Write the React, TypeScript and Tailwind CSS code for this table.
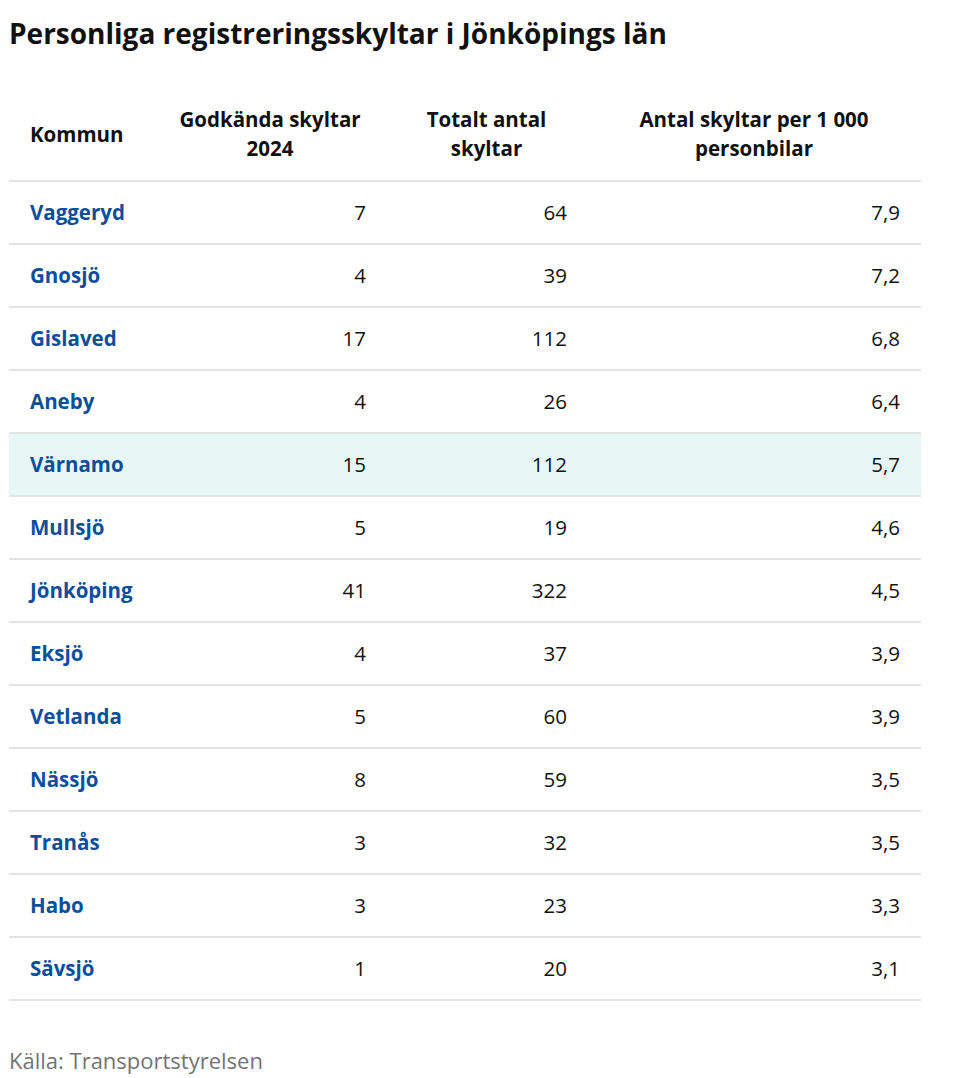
import React from "react"

type Row = {
  name: string
  approved: number
  total: number
  perThousand: string
  highlight?: boolean
}

const rows: Row[] = [
  { name: "Vaggeryd", approved: 7, total: 64, perThousand: "7,9" },
  { name: "Gnosjö", approved: 4, total: 39, perThousand: "7,2" },
  { name: "Gislaved", approved: 17, total: 112, perThousand: "6,8" },
  { name: "Aneby", approved: 4, total: 26, perThousand: "6,4" },
  { name: "Värnamo", approved: 15, total: 112, perThousand: "5,7", highlight: true },
  { name: "Mullsjö", approved: 5, total: 19, perThousand: "4,6" },
  { name: "Jönköping", approved: 41, total: 322, perThousand: "4,5" },
  { name: "Eksjö", approved: 4, total: 37, perThousand: "3,9" },
  { name: "Vetlanda", approved: 5, total: 60, perThousand: "3,9" },
  { name: "Nässjö", approved: 8, total: 59, perThousand: "3,5" },
  { name: "Tranås", approved: 3, total: 32, perThousand: "3,5" },
  { name: "Habo", approved: 3, total: 23, perThousand: "3,3" },
  { name: "Sävsjö", approved: 1, total: 20, perThousand: "3,1" },
]

export default function App() {
  return (
    <div className="min-h-screen bg-white px-[9px] pt-[14px] font-['Open_Sans','Noto_Sans',sans-serif] text-[#111]">
      <h1 className="text-[28px] font-bold leading-[38px]">
        Personliga registreringsskyltar i Jönköpings län
      </h1>

      <table className="mt-[36px] w-[912px] table-fixed border-collapse text-[20.5px]">
        <colgroup>
          <col className="w-[145px]" />
          <col className="w-[232px]" />
          <col className="w-[201px]" />
          <col />
        </colgroup>
        <thead>
          <tr className="border-b-2 border-[#e3e3e3]">
            <th className="px-[21px] py-[17px] text-left font-bold leading-[29px]">Kommun</th>
            <th className="px-[16px] py-[17px] text-center font-bold leading-[29px]">Godkända skyltar 2024</th>
            <th className="px-[36px] py-[17px] text-center font-bold leading-[29px]">Totalt antal skyltar</th>
            <th className="px-[44px] py-[17px] text-center font-bold leading-[29px]">Antal skyltar per 1 000 personbilar</th>
          </tr>
        </thead>
        <tbody>
          {rows.map((r) => (
            <tr key={r.name} className={`border-b-2 border-[#e3e3e3] ${r.highlight ? "bg-[#e6f7f6]" : ""}`}>
              <td className="px-[21px] py-[16px] leading-[29px]">
                <a href="#" className="font-bold text-[#0b4f9c]">
                  {r.name}
                </a>
              </td>
              <td className="px-[20px] py-[16px] text-right leading-[29px]">{r.approved}</td>
              <td className="px-[20px] py-[16px] text-right leading-[29px]">{r.total}</td>
              <td className="px-[21px] py-[16px] text-right leading-[29px]">{r.perThousand}</td>
            </tr>
          ))}
        </tbody>
      </table>

      <p className="mt-[45px] text-[22px] leading-[29px] text-[#737373]">Källa: Transportstyrelsen</p>
    </div>
  )
}
